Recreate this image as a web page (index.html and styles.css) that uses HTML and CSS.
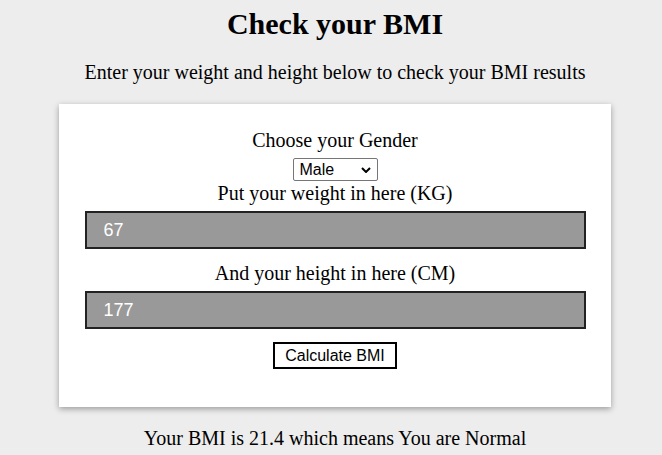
FILE: index.html
```html
<!DOCTYPE html>
<html>
<head>
<meta charset="utf-8">
<link rel="stylesheet" href="styles.css">
</head>
<body>
<div class="page">
  <h1 class="title">Check your BMI</h1>
  <p class="subtitle">Enter your weight and height below to check your BMI results</p>
  <div class="card">
    <div class="label label-first">Choose your Gender</div>
    <div class="select-wrap">
      <select class="gender">
        <option>Male</option>
        <option>Female</option>
      </select>
      <svg class="chevron" width="10" height="6" viewBox="0 0 10 6"><path d="M1 1 L5 5 L9 1" fill="none" stroke="#000" stroke-width="2"/></svg>
    </div>
    <div class="label label-after-select">Put your weight in here (KG)</div>
    <input class="field" type="text" value="67">
    <div class="label">And your height in here (CM)</div>
    <input class="field" type="text" value="177">
    <button class="calc">Calculate BMI</button>
  </div>
  <p class="result">Your BMI is 21.4 which means You are Normal</p>
</div>
</body>
</html>
```
FILE: styles.css
```css
html, body {
  margin: 0;
  padding: 0;
  background: #ededed;
}
body {
  font-family: "Liberation Serif", "Times New Roman", serif;
  color: #000;
  overflow: hidden;
}
.page {
  width: 654px;
  margin-left: 8px;
  display: flex;
  flex-direction: column;
  align-items: center;
}
.title {
  font-size: 30px;
  font-weight: bold;
  margin: 6px 0 0;
  line-height: 35px;
}
.subtitle {
  font-size: 20px;
  margin: 20px 0 0;
  line-height: 23px;
}
.card {
  box-sizing: border-box;
  width: 552px;
  margin-top: 20px;
  background: #fff;
  box-shadow: 0 2px 6px rgba(0,0,0,0.35);
  padding: 25px 25px 38px;
  display: flex;
  flex-direction: column;
  align-items: center;
}
.label {
  font-size: 20px;
  line-height: 23px;
  margin-top: 13px;
}
.label-first {
  margin-top: 0;
}
.label-after-select {
  margin-top: 1px;
}
.select-wrap {
  position: relative;
  width: 85px;
  height: 23px;
  margin-top: 6px;
}
.gender {
  -webkit-appearance: none;
  appearance: none;
  box-sizing: border-box;
  display: block;
  font-family: "Liberation Sans", Arial, sans-serif;
  font-size: 16px;
  width: 85px;
  height: 23px;
  margin: 0;
  border: 1px solid #767676;
  border-radius: 2px;
  background: #fff;
  color: #000;
  padding: 0 0 0 6px;
  line-height: 21px;
}
.chevron {
  position: absolute;
  right: 7px;
  top: 9px;
  pointer-events: none;
}
.field {
  box-sizing: border-box;
  width: 501px;
  height: 38px;
  margin-top: 6px;
  border: 2px solid #222;
  background: #999;
  color: #fff;
  font-family: "Liberation Sans", Arial, sans-serif;
  font-size: 18px;
  padding: 0 0 0 17px;
  outline: none;
}
.calc {
  margin-top: 13px;
  box-sizing: border-box;
  width: 124px;
  height: 27px;
  border: 2px solid #000;
  background: #fff;
  font-family: "Liberation Sans", Arial, sans-serif;
  font-size: 16px;
  color: #000;
  padding: 0;
}
.result {
  font-size: 20px;
  line-height: 23px;
  margin: 20px 0 0;
}
```
